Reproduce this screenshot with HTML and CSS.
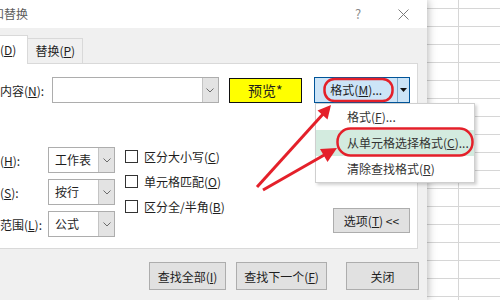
FILE: index.html
```html
<!DOCTYPE html>
<html lang="zh-CN">
<head>
  <meta charset="UTF-8" />
  <title>查找和替换</title>
  <link rel="stylesheet" href="styles.css">
</head>
<body>
  <div class="screen">
    <div class="dialog">
      <!-- title bar -->
      <div class="titlebar">
        <span class="title">查找和替换</span>
        <span class="help">?</span>
        <span class="close">
          <svg width="11" height="11" viewBox="0 0 11 11"><path d="M0.5 0.5 L10.5 10.5 M10.5 0.5 L0.5 10.5" stroke="#7a7a7a" stroke-width="1" fill="none"/></svg>
        </span>
      </div>

      <!-- tabs -->
      <div class="tabs">
        <div class="tab active">查找(<u>D</u>)</div>
        <div class="tab">替换(<u>P</u>)</div>
      </div>

      <div class="panel">
        <div class="find-row">
          <label class="lbl">查找内容(<u>N</u>):</label>
          <div class="combo wide">
            <span class="val"></span>
            <span class="drop"><svg width="8" height="5" viewBox="0 0 8 5"><path d="M0.5 0.5 L4 4 L7.5 0.5" stroke="#6b6b6b" fill="none"/></svg></span>
          </div>
          <div class="preview">预览*</div>
          <div class="split">
            <span class="main">格式(<u>M</u>)...</span>
            <span class="arrow"><svg width="7" height="4" viewBox="0 0 7 4"><path d="M0 0 L7 0 L3.5 4 Z" fill="#111"/></svg></span>
          </div>
        </div>

        <div class="options">
          <div class="fields">
            <div class="field">
              <label class="lbl">范围(<u>H</u>):</label>
              <div class="combo"><span class="val">工作表</span><span class="drop"><svg width="8" height="5" viewBox="0 0 8 5"><path d="M0.5 0.5 L4 4 L7.5 0.5" stroke="#6b6b6b" fill="none"/></svg></span></div>
            </div>
            <div class="field">
              <label class="lbl">搜索(<u>S</u>):</label>
              <div class="combo"><span class="val">按行</span><span class="drop"><svg width="8" height="5" viewBox="0 0 8 5"><path d="M0.5 0.5 L4 4 L7.5 0.5" stroke="#6b6b6b" fill="none"/></svg></span></div>
            </div>
            <div class="field">
              <label class="lbl">查找范围(<u>L</u>):</label>
              <div class="combo"><span class="val">公式</span><span class="drop"><svg width="8" height="5" viewBox="0 0 8 5"><path d="M0.5 0.5 L4 4 L7.5 0.5" stroke="#6b6b6b" fill="none"/></svg></span></div>
            </div>
          </div>

          <div class="checks">
            <div class="check"><span class="box"></span><span>区分大小写(<u>C</u>)</span></div>
            <div class="check"><span class="box"></span><span>单元格匹配(<u>O</u>)</span></div>
            <div class="check"><span class="box"></span><span>区分全/半角(<u>B</u>)</span></div>
          </div>

          <button class="btn opt-btn">选项(<u>T</u>) &lt;&lt;</button>
        </div>
      </div>

      <div class="footer">
        <button class="btn find-all">查找全部(<u>I</u>)</button>
        <button class="btn find-next">查找下一个(<u>F</u>)</button>
        <button class="btn close-btn">关闭</button>
      </div>
    </div>

    <div class="sheet"></div>

    <!-- dropdown of the format button -->
    <div class="menu">
      <div class="item">格式(<u>F</u>)...</div>
      <div class="item hover">从单元格选择格式(<u>C</u>)...</div>
      <div class="item">清除查找格式(<u>R</u>)</div>
    </div>

    <!-- red annotations -->
    <svg class="marks" width="500" height="300" viewBox="0 0 500 300">
      <rect x="324.5" y="79" width="68" height="22" rx="10" fill="none" stroke="#e4202a" stroke-width="2.5"/>
      <rect x="337.5" y="128.5" width="135" height="27" rx="13" fill="none" stroke="#e4202a" stroke-width="2.5"/>
      <line x1="257" y1="187" x2="324" y2="113" stroke="#e4202a" stroke-width="3"/>
      <polygon points="331,105 327.5,119.5 317.5,110.5" fill="#e4202a"/>
      <line x1="263" y1="190" x2="326" y2="154" stroke="#e4202a" stroke-width="3"/>
      <polygon points="337,148 327.5,162 320,149" fill="#e4202a"/>
    </svg>
  </div>
</body>
</html>
```

FILE: styles.css
```css
* {
  box-sizing: border-box;
}

body {
  margin: 0;
  width: 500px;
  height: 300px;
  overflow: hidden;
  font-family: "Noto Sans CJK SC", "Noto Sans", sans-serif;
  font-size: 12px;
  color: #1e1e1e;
}

u {
  text-decoration: underline;
  text-underline-offset: 1px;
}

.screen {
  position: relative;
  display: flex;
  width: 500px;
  height: 300px;
  overflow: hidden;
  background: #fff;
}

/* ---------- dialog ---------- */

.dialog {
  flex: none;
  width: 472px;
  height: 300px;
  margin-left: -45px;
  display: flex;
  flex-direction: column;
  background: #f0f0f0;
  box-shadow: 0 0 9px rgba(0, 0, 0, 0.35);
  position: relative;
  z-index: 1;
}

.titlebar {
  height: 28px;
  flex: none;
  background: #fff;
  display: flex;
  align-items: center;
  padding: 0 9px 0 13px;
  line-height: 28px;
}

.title {
  color: #5c5c5c;
}

.help {
  margin-left: auto;
  width: 20px;
  text-align: center;
  color: #8a8a8a;
  font-size: 13px;
}

.close {
  width: 30px;
  margin-left: 20px;
  display: flex;
  justify-content: center;
}

.tabs {
  height: 35px;
  flex: none;
  display: flex;
  align-items: flex-end;
  padding-left: 13px;
}

.tab {
  height: 25px;
  line-height: 24px;
  padding: 0 7px;
  border: 1px solid #d9d9d9;
  border-bottom: none;
  background: #f0f0f0;
  color: #1e1e1e;
}

.tab.active {
  height: 29px;
  line-height: 28px;
  padding: 0 11px 0 7px;
  background: #fff;
  margin-bottom: -1px;
  position: relative;
  z-index: 1;
}

.tab + .tab {
  border-left: none;
}

.panel {
  height: 186px;
  flex: none;
  margin: 0 9px;
  background: #fff;
  border: 1px solid #d9d9d9;
  padding: 13px 7px 0 11px;
}

.lbl {
  flex: none;
  white-space: nowrap;
}

.find-row {
  display: flex;
  align-items: center;
  height: 26px;
}

.find-row .lbl {
  width: 76px;
}

.combo {
  display: flex;
  width: 67px;
  height: 26px;
  border: 1px solid #adadad;
  background: #fff;
}

.combo.wide {
  width: 167px;
}

.combo .val {
  flex: 1;
  padding-left: 6px;
  line-height: 24px;
}

.combo .drop {
  width: 16px;
  background: #e3e3e3;
  border-left: 1px solid #c4c4c4;
  display: flex;
  align-items: center;
  justify-content: center;
}

.preview {
  width: 74px;
  height: 25px;
  margin-left: 10px;
  background: #ffff00;
  border: 1px solid #111;
  text-align: center;
  line-height: 23px;
  font-size: 14px;
}

.split {
  display: flex;
  width: 96px;
  height: 26px;
  margin-left: 12px;
  background: #cce4f7;
  border: 1px solid #005499;
}

.split .main {
  width: 83px;
  text-align: center;
  line-height: 24px;
  border-right: 1px solid #7fa9c9;
}

.split .arrow {
  flex: 1;
  display: flex;
  align-items: center;
  justify-content: center;
}

.options {
  display: flex;
  margin-top: 44px;
}

.fields {
  display: flex;
  flex-direction: column;
  gap: 6px;
}

.field {
  display: flex;
  align-items: center;
}

.field .lbl {
  width: 72px;
}

.checks {
  margin-left: 10px;
  padding-top: 3px;
  display: flex;
  flex-direction: column;
  gap: 12px;
}

.check {
  display: flex;
  align-items: center;
  height: 13px;
  gap: 6px;
  white-space: nowrap;
}

.box {
  flex: none;
  width: 13px;
  height: 13px;
  border: 1px solid #333;
  background: #fff;
}

.btn {
  font-family: inherit;
  font-size: 12px;
  color: #1e1e1e;
  background: #e1e1e1;
  border: 1px solid #adadad;
  padding: 0;
  height: 28px;
}

.opt-btn {
  margin-left: auto;
  align-self: flex-end;
  margin-bottom: 4px;
  width: 77px;
  height: 25px;
}

.footer {
  display: flex;
  justify-content: flex-end;
  padding: 13px 8px 0 0;
}

.find-all {
  width: 77px;
}

.find-next {
  width: 91px;
  margin-left: 10px;
}

.close-btn {
  width: 73px;
  margin-left: 19px;
}

/* ---------- worksheet behind ---------- */

.sheet {
  flex: 1;
  background-color: #fff;
  background-image:
    linear-gradient(#d6d6d6, #d6d6d6),
    repeating-linear-gradient(to bottom, transparent 0 8px, #d6d6d6 8px 9px, transparent 9px 18px);
  background-size: 1px 100%, 100% 100%;
  background-position: 31px 0, 0 0;
  background-repeat: no-repeat, repeat;
}

/* ---------- dropdown menu ---------- */

.menu {
  position: absolute;
  left: 315px;
  top: 103px;
  width: 160px;
  background: #fff;
  border: 1px solid #cfcfcf;
  box-shadow: 2px 2px 3px rgba(0, 0, 0, 0.18);
  z-index: 2;
}

.item {
  height: 26px;
  line-height: 26px;
  padding-left: 31px;
  color: #333;
  white-space: nowrap;
}

.item.hover {
  background: #d3ebdf;
}

.marks {
  position: absolute;
  left: 0;
  top: 0;
  z-index: 3;
  pointer-events: none;
}
```
